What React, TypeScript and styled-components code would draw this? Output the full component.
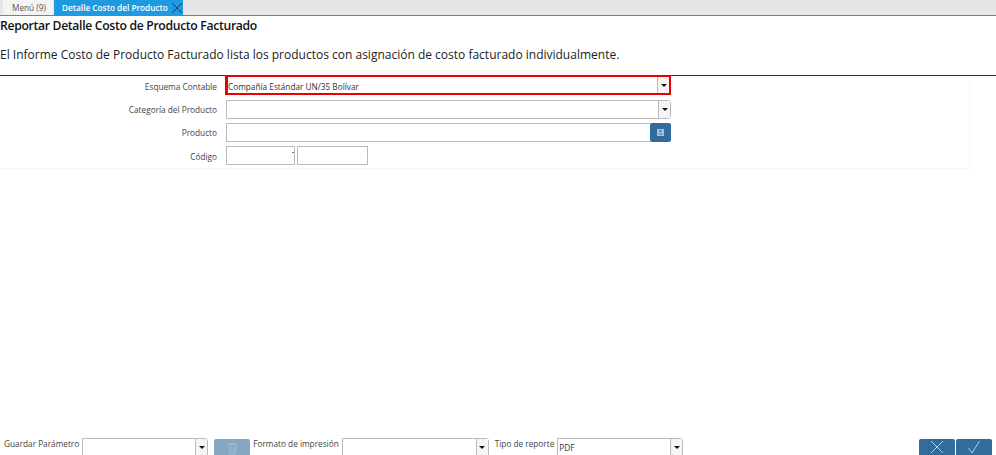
import styled, { createGlobalStyle } from "styled-components";

const GlobalStyle = createGlobalStyle`
  html, body {
    margin: 0;
    padding: 0;
    background-color: white;
  }
  body {
    font-family: "Open Sans", "Noto Sans", sans-serif;
    color: #333;
  }
`;

const Page = styled.div`
  width: 996px;
  height: 455px;
  overflow: hidden;
  display: flex;
  flex-direction: column;
`;

const TabBar = styled.div`
  height: 15px;
  flex: none;
  display: flex;
  padding-left: 3px;
  gap: 1px;
  background-color: #e6e6e6;
  border-bottom: 1px solid #1f9ae0;
`;

const Tab = styled.div<{ $active?: boolean }>`
  width: ${(p) => (p.$active ? "129px" : "50px")};
  box-sizing: border-box;
  padding-left: ${(p) => (p.$active ? "8px" : "9px")};
  display: flex;
  align-items: center;
  gap: 3px;
  font-size: 8.25px;
  white-space: nowrap;
  font-weight: ${(p) => (p.$active ? 600 : 400)};
  background-color: ${(p) => (p.$active ? "#1f9ae0" : "#f4f4f4")};
  color: ${(p) => (p.$active ? "white" : "#555")};
`;

const Title = styled.h1`
  margin: 0;
  height: 19px;
  line-height: 19px;
  font-size: 12.2px;
  letter-spacing: -0.32px;
  font-weight: 600;
  color: #111;
`;

const Description = styled.p`
  margin: 0;
  padding-top: 10px;
  height: 30px;
  line-height: 20px;
  font-size: 12px;
  color: #222;
`;

const Divider = styled.div`
  flex: none;
  height: 1px;
  background-color: #0f3a5f;
`;

const FormCard = styled.div`
  width: 969px;
  height: 92px;
  box-sizing: border-box;
  padding-top: 1px;
  display: flex;
  flex-direction: column;
  gap: 5px;
  box-shadow: 0 1px 2px rgba(0, 0, 0, 0.05), 1px 0 2px rgba(0, 0, 0, 0.03);
`;

const FormRow = styled.div`
  display: grid;
  grid-template-columns: 217px 445px;
  column-gap: 9px;
  align-items: center;
  height: 18px;
`;

const Label = styled.label<{ $drop?: number }>`
  text-align: right;
  font-size: 8.25px;
  color: #444;
  white-space: nowrap;
  padding-top: ${(p) => p.$drop ?? 0}px;
`;

const Field = styled.div<{ $highlight?: boolean }>`
  height: ${(p) => (p.$highlight ? "20px" : "19px")};
  box-sizing: border-box;
  display: flex;
  border: ${(p) => (p.$highlight ? "2px solid #ee0000" : "1px solid #bbb")};
  border-left-width: ${(p) => (p.$highlight ? "3px" : "1px")};
  border-radius: ${(p) => (p.$highlight ? "0" : "0 3px 3px 0")};
  background-color: white;
  margin-top: ${(p) => (p.$highlight ? "-2px" : "0")};
  margin-left: ${(p) => (p.$highlight ? "-1px" : "0")};
`;

const FieldText = styled.span`
  flex: 1;
  font-size: 8.25px;
  line-height: 20px;
  color: #333;
  white-space: nowrap;
`;

const Arrow = styled.div`
  width: 11px;
  flex: none;
  display: flex;
  align-items: center;
  justify-content: center;
  border-left: 1px solid #bbb;
  background-color: #f5f5f5;
  &::after {
    content: "";
    border-left: 3px solid transparent;
    border-right: 3px solid transparent;
    border-top: 3px solid #111;
  }
`;

const SearchRow = styled.div`
  display: flex;
  height: 19px;
`;

const SearchInput = styled.div`
  flex: 1;
  box-sizing: border-box;
  border: 1px solid #bbb;
  border-right: 0;
`;

const SearchButton = styled.div`
  width: 21px;
  display: flex;
  align-items: center;
  justify-content: center;
  background-color: #326c9c;
  border-radius: 2px;
`;

const RangeRow = styled.div`
  display: flex;
  gap: 2px;
  height: 19px;
`;

const RangeInput = styled.div<{ $width: number }>`
  width: ${(p) => p.$width}px;
  box-sizing: border-box;
  border: 1px solid #bbb;
  display: flex;
  justify-content: flex-end;
  padding: 5px 0 0;
`;

const RangeTick = styled.span`
  width: 2px;
  height: 1px;
  background-color: #777;
`;

const Spacer = styled.div`
  flex: 1;
`;

const Footer = styled.div`
  flex: none;
  height: 17px;
  display: flex;
  align-items: flex-start;
  padding-left: 4px;
`;

const FooterLabel = styled.span<{ $gap: number }>`
  font-size: 8.25px;
  line-height: 11px;
  color: #444;
  white-space: nowrap;
  margin-right: ${(p) => p.$gap}px;
`;

const FooterSelect = styled.div<{ $width: number; $gap: number }>`
  width: ${(p) => p.$width}px;
  height: 24px;
  flex: none;
  box-sizing: border-box;
  display: flex;
  margin-right: ${(p) => p.$gap}px;
  border: 1px solid #bbb;
  border-radius: 0 3px 0 0;
`;

const FooterValue = styled.span`
  flex: 1;
  padding: 3px 0 0 1px;
  font-size: 8.25px;
  line-height: 12px;
`;

const FooterArrow = styled(Arrow)`
  height: 16px;
`;

const TrashButton = styled.div`
  width: 36px;
  height: 24px;
  flex: none;
  margin-top: 1px;
  margin-right: 3px;
  display: flex;
  justify-content: center;
  padding-top: 3px;
  box-sizing: border-box;
  background-color: #84a7c4;
  border-radius: 2px 2px 0 0;
`;

const ActionGroup = styled.div`
  margin-left: auto;
  margin-top: 1px;
  display: flex;
  gap: 1px;
  padding-right: 4px;
`;

const ActionButton = styled.div`
  width: 36px;
  height: 24px;
  display: flex;
  justify-content: center;
  padding-top: 1px;
  box-sizing: border-box;
  background-color: #326c9c;
  border-radius: 2px 2px 0 0;
`;

export default function App() {
  return (
    <Page>
      <GlobalStyle />
      <TabBar>
        <Tab>Menú (9)</Tab>
        <Tab $active>
          Detalle Costo del Producto
          <svg width="12" height="12" viewBox="0 0 12 12">
            <path d="M1 1L11 11M11 1L1 11" stroke="#14425f" strokeWidth="1" />
          </svg>
        </Tab>
      </TabBar>
      <Title>Reportar Detalle Costo de Producto Facturado</Title>
      <Description>
        El Informe Costo de Producto Facturado lista los productos con asignación de costo facturado individualmente.
      </Description>
      <Divider />
      <FormCard>
        <FormRow>
          <Label>Esquema Contable</Label>
          <Field $highlight>
            <FieldText>Compañía Estándar UN/35 Bolívar</FieldText>
            <Arrow />
          </Field>
        </FormRow>
        <FormRow>
          <Label>Categoría del Producto</Label>
          <Field>
            <FieldText />
            <Arrow />
          </Field>
        </FormRow>
        <FormRow>
          <Label>Producto</Label>
          <SearchRow>
            <SearchInput />
            <SearchButton>
              <svg width="7" height="7" viewBox="0 0 7 7">
                <rect x="0" y="0" width="7" height="7" fill="#a9c3da" />
                <rect x="2" y="1" width="3" height="2" fill="#5f8db3" />
                <rect x="1.5" y="4" width="4" height="2" fill="#7ea4c4" />
              </svg>
            </SearchButton>
          </SearchRow>
        </FormRow>
        <FormRow>
          <Label $drop={2}>Código</Label>
          <RangeRow>
            <RangeInput $width={69}>
              <RangeTick />
            </RangeInput>
            <RangeInput $width={71} />
          </RangeRow>
        </FormRow>
      </FormCard>
      <Spacer />
      <Footer>
        <FooterLabel $gap={3}>Guardar Parámetro</FooterLabel>
        <FooterSelect $width={126} $gap={6}>
          <FooterValue />
          <FooterArrow />
        </FooterSelect>
        <TrashButton>
          <svg width="11" height="13" viewBox="0 0 11 13" fill="none" stroke="#a3bdd3" strokeWidth="1">
            <path d="M1 2.5H10M4 2.5V1H7V2.5M2 2.5L2.7 12H8.3L9 2.5" />
            <path d="M4.3 4.5V10M6.7 4.5V10" />
          </svg>
        </TrashButton>
        <FooterLabel $gap={3}>Formato de impresión</FooterLabel>
        <FooterSelect $width={147} $gap={6}>
          <FooterValue />
          <FooterArrow />
        </FooterSelect>
        <FooterLabel $gap={3}>Tipo de reporte</FooterLabel>
        <FooterSelect $width={126} $gap={0}>
          <FooterValue>PDF</FooterValue>
          <FooterArrow />
        </FooterSelect>
        <ActionGroup>
          <ActionButton>
            <svg width="14" height="14" viewBox="0 0 14 14">
              <path d="M1 1L13 13M13 1L1 13" stroke="#b9cfe1" strokeWidth="1" fill="none" />
            </svg>
          </ActionButton>
          <ActionButton>
            <svg width="14" height="14" viewBox="0 0 14 14">
              <path d="M1.5 8L5 13L12.5 1" stroke="#b9cfe1" strokeWidth="1" fill="none" />
            </svg>
          </ActionButton>
        </ActionGroup>
      </Footer>
    </Page>
  );
}
